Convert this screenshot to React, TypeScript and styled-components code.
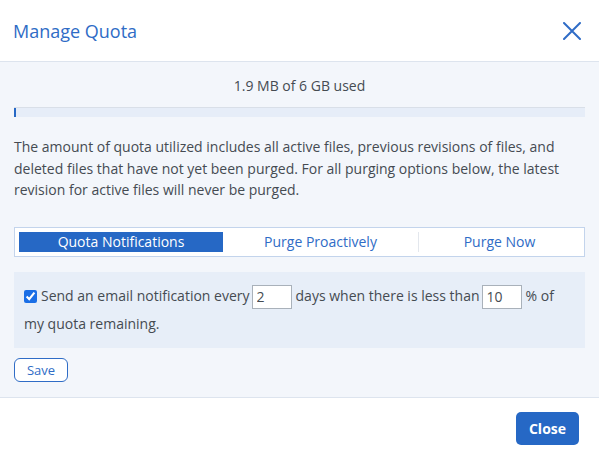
import React, { useState } from "react";
import styled, { createGlobalStyle } from "styled-components";

const GlobalStyle = createGlobalStyle`
  html, body {
    margin: 0;
    padding: 0;
    background: #ffffff;
  }
  body {
    font-family: "Open Sans", "Noto Sans", sans-serif;
    color: #454b52;
  }
  * {
    box-sizing: border-box;
  }
`;

const Dialog = styled.div`
  width: 599px;
  height: 458px;
  display: flex;
  flex-direction: column;
  background: #ffffff;
`;

const Header = styled.div`
  height: 62px;
  display: flex;
  align-items: center;
  justify-content: space-between;
  padding: 0 17px 0 13px;
  border-bottom: 1px solid #dde4ee;
`;

const Title = styled.h2`
  margin: 0;
  font-size: 18px;
  font-weight: 400;
  color: #2f6cc6;
`;

const CloseIcon = styled.button`
  border: none;
  background: none;
  padding: 0;
  width: 20px;
  height: 20px;
  display: flex;
  align-items: center;
  justify-content: center;
  cursor: pointer;
`;

const Body = styled.div`
  flex: 1;
  background: #f3f6fb;
  padding: 15px 14px 15px 14px;
  border-bottom: 1px solid #dde4ee;
  display: flex;
  flex-direction: column;
`;

const Usage = styled.div`
  text-align: center;
  font-size: 14px;
  line-height: 18px;
  color: #454b52;
`;

const Bar = styled.div`
  margin-top: 12px;
  height: 10px;
  background: #e6edf8;
  border-top: 1px solid #d9dfe8;
  overflow: hidden;
`;

const BarFill = styled.div`
  height: 100%;
  background: #2668c5;
`;

const Description = styled.p`
  margin: 19px 0 0;
  font-size: 14px;
  line-height: 21.5px;
  color: #454b52;
`;

const Tabs = styled.div`
  margin-top: 26px;
  height: 30px;
  display: flex;
  align-items: stretch;
  background: #ffffff;
  border: 1px solid #c3d4ec;
  padding: 4px;
`;

const Tab = styled.button<{ $active?: boolean; $width?: number; $divider?: boolean }>`
  flex: ${(p) => (p.$width ? `0 0 ${p.$width}px` : "1")};
  border: none;
  border-left: ${(p) => (p.$divider ? "1px solid #e3e7ed" : "none")};
  background: ${(p) => (p.$active ? "#2668c5" : "transparent")};
  color: ${(p) => (p.$active ? "#ffffff" : "#2f6cc6")};
  font-family: inherit;
  font-size: 14px;
  padding: 0;
  line-height: 20px;
  cursor: pointer;
`;

const Panel = styled.div`
  margin-top: 15px;
  background: #e7eef8;
  padding: 10px 10px;
  font-size: 14px;
  line-height: 28px;
  color: #454b52;
`;

const Check = styled.input`
  width: 13px;
  height: 13px;
  margin: 0 4px 0 0;
  vertical-align: -2px;
  accent-color: #1a6ee6;
`;

const NumberInput = styled.input`
  width: 40px;
  height: 24px;
  border: 1px solid #a9b1ba;
  background: #ffffff;
  font-family: inherit;
  font-size: 14px;
  color: #454b52;
  padding: 0 4px;
  margin: 0 4px 0 2px;
  vertical-align: middle;
  outline: none;
`;

const SaveButton = styled.button`
  margin-top: 10px;
  align-self: flex-start;
  width: 54px;
  height: 24px;
  border: 1px solid #2f6cc6;
  border-radius: 6px;
  background: #ffffff;
  color: #2f6cc6;
  font-family: inherit;
  font-size: 13px;
  padding: 0;
  cursor: pointer;
`;

const Footer = styled.div`
  height: 60px;
  display: flex;
  align-items: center;
  justify-content: flex-end;
  padding: 0 20px 0 0;
`;

const PrimaryButton = styled.button`
  width: 63px;
  height: 33px;
  border: none;
  border-radius: 5px;
  background: #2668c5;
  color: #ffffff;
  font-family: inherit;
  font-size: 14px;
  font-weight: 700;
  cursor: pointer;
`;

const tabs = [
  { label: "Quota Notifications", width: 204 },
  { label: "Purge Proactively", width: 195 },
  { label: "Purge Now" },
];

const App = () => {
  const [active, setActive] = useState(0);
  const [days, setDays] = useState("2");
  const [percent, setPercent] = useState("10");
  const [notify, setNotify] = useState(true);
  const used = 1.9 / (6 * 1024);

  return (
    <>
      <GlobalStyle />
      <Dialog>
        <Header>
          <Title>Manage Quota</Title>
          <CloseIcon aria-label="Close">
            <svg width="18" height="18" viewBox="0 0 18 18">
              <path
                d="M1 1 L17 17 M17 1 L1 17"
                stroke="#2f6cc6"
                strokeWidth="2"
                strokeLinecap="round"
              />
            </svg>
          </CloseIcon>
        </Header>
        <Body>
          <Usage>1.9 MB of 6 GB used</Usage>
          <Bar>
            <BarFill style={{ width: `max(2px, ${used * 100}%)` }} />
          </Bar>
          <Description>
            The amount of quota utilized includes all active files, previous revisions of files, and
            deleted files that have not yet been purged. For all purging options below, the latest
            revision for active files will never be purged.
          </Description>
          <Tabs>
            {tabs.map((t, i) => (
              <Tab
                key={t.label}
                $active={active === i}
                $width={t.width}
                $divider={i === 2}
                onClick={() => setActive(i)}
              >
                {t.label}
              </Tab>
            ))}
          </Tabs>
          <Panel>
            <Check
              type="checkbox"
              checked={notify}
              onChange={(e) => setNotify(e.target.checked)}
            />
            Send an email notification every
            <NumberInput value={days} onChange={(e) => setDays(e.target.value)} />
            days when there is less than
            <NumberInput value={percent} onChange={(e) => setPercent(e.target.value)} />
            % of my quota remaining.
          </Panel>
          <SaveButton>Save</SaveButton>
        </Body>
        <Footer>
          <PrimaryButton>Close</PrimaryButton>
        </Footer>
      </Dialog>
    </>
  );
};

export default App;
